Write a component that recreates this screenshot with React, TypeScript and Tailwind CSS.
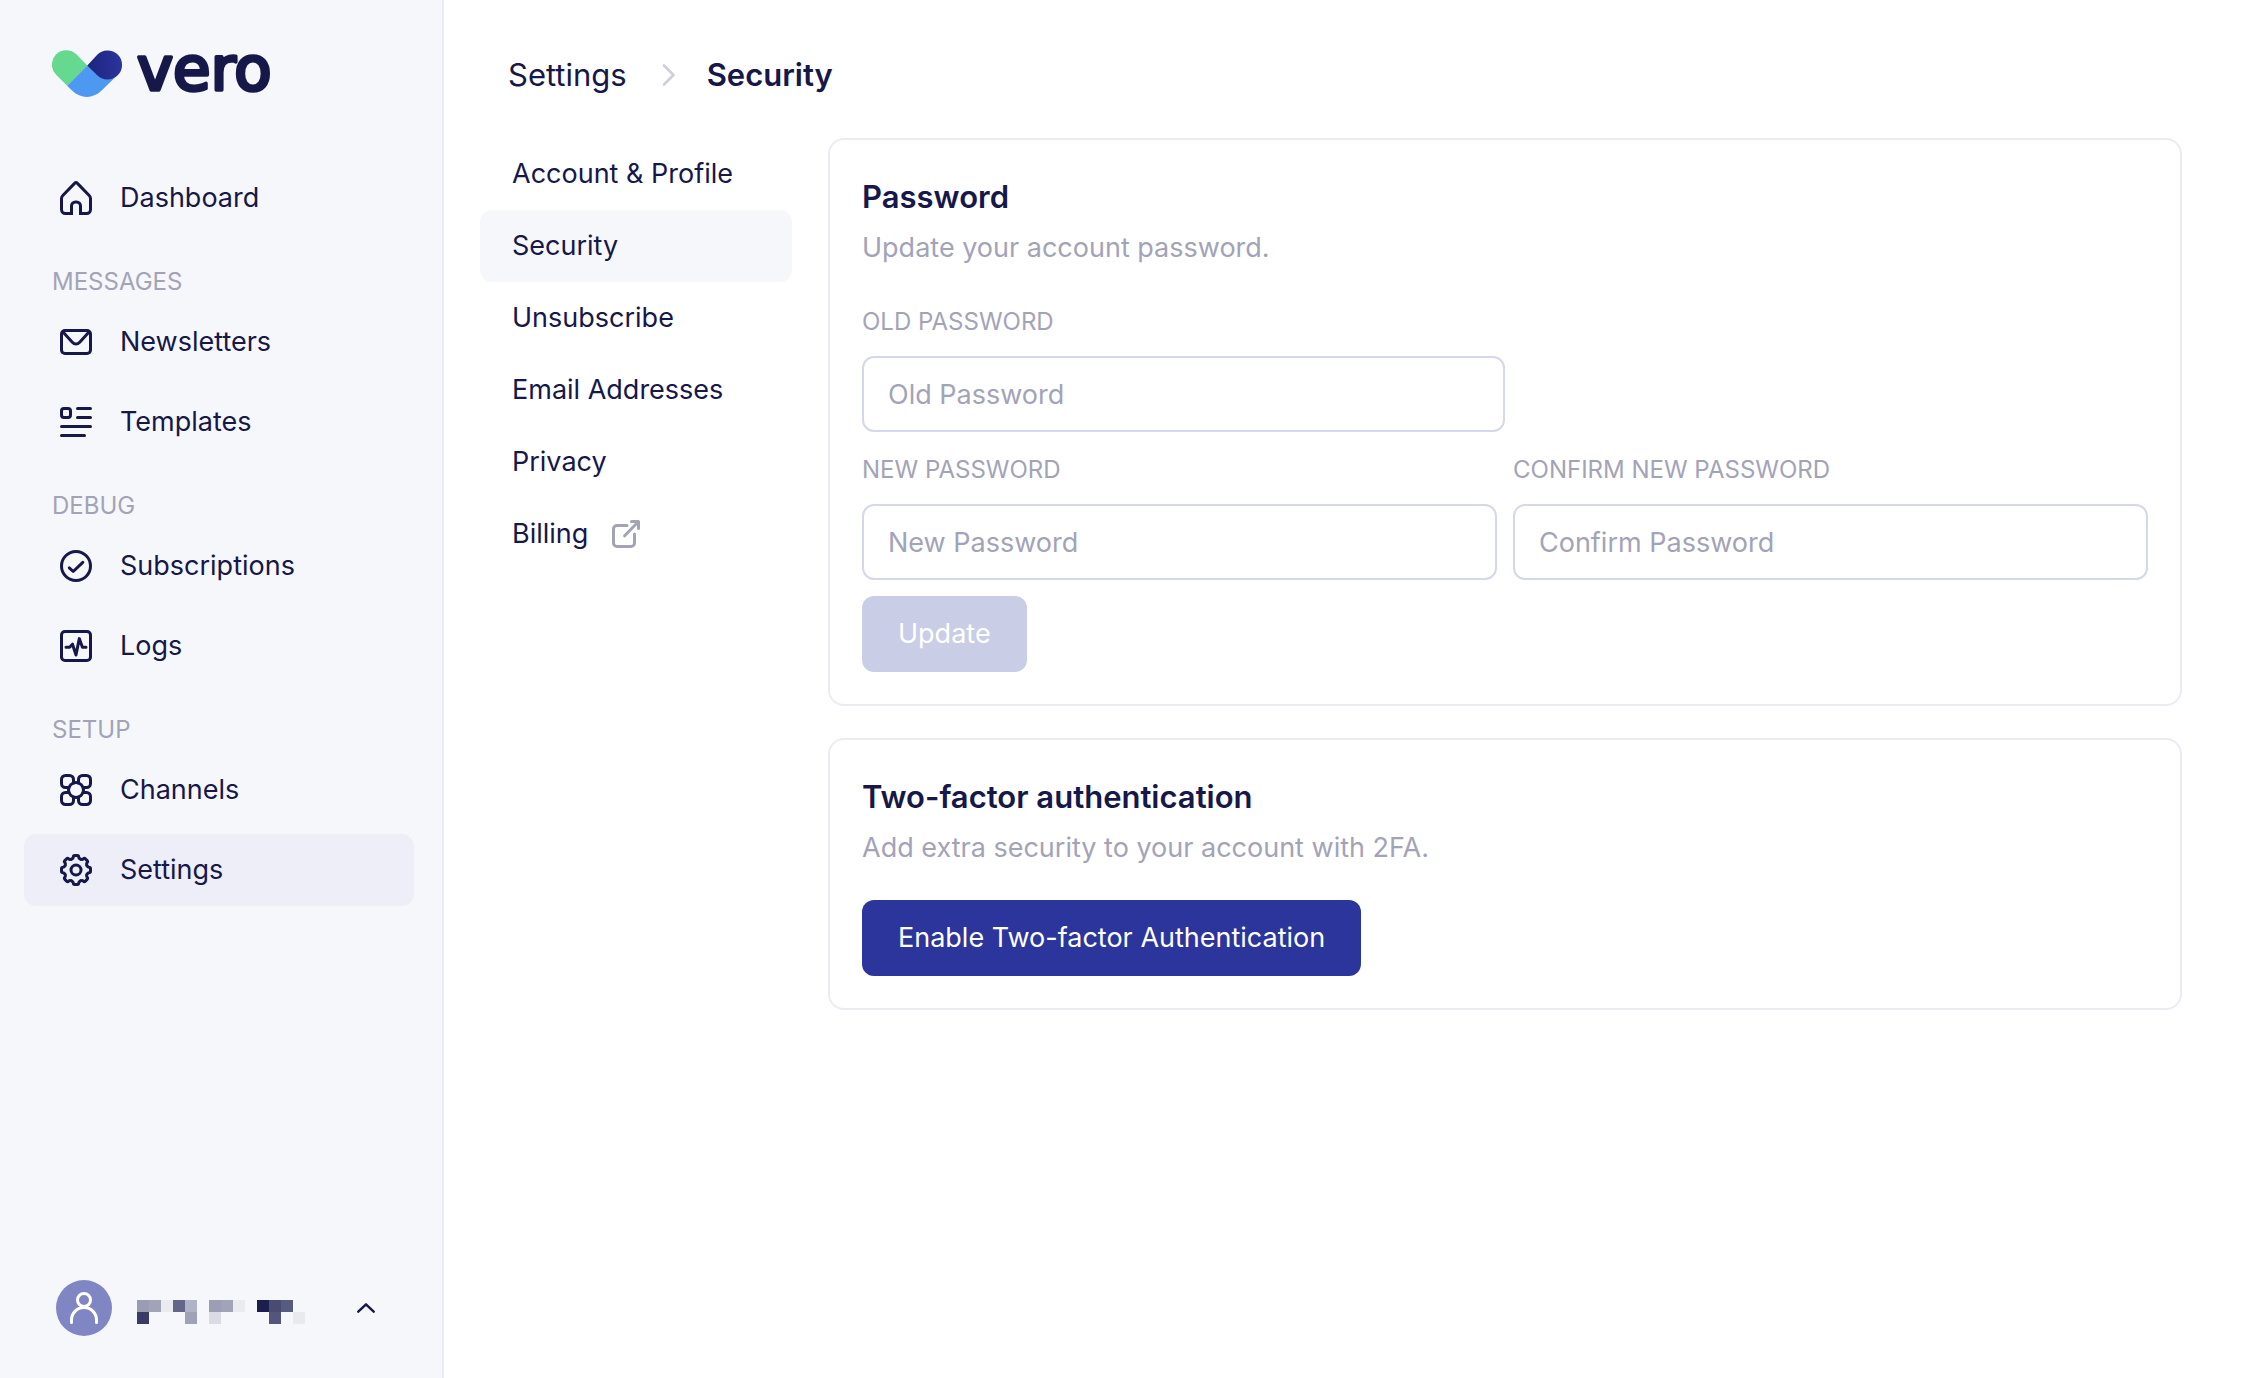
import type { ReactNode } from "react"
import clsx from "clsx"

type NavItem = {
  label: string
  icon: ReactNode
  active?: boolean
}

type NavSection = {
  title?: string
  items: NavItem[]
}

function Icon({ w = 32, h = 32, children }: { w?: number; h?: number; children: ReactNode }) {
  return (
    <svg
      width={w}
      height={h}
      viewBox={`0 0 ${w} ${h}`}
      fill="none"
      stroke="currentColor"
      strokeWidth={3}
      strokeLinecap="round"
      strokeLinejoin="round"
      className="shrink-0"
      aria-hidden="true"
    >
      {children}
    </svg>
  )
}

const homeIcon = (
  <Icon h={34}>
    <path
      strokeLinecap="butt"
      d="M13 32.5H5.5a4 4 0 0 1-4-4V17.6c0-1.3.4-2.2 1.3-3.1L14.8 2.1c.7-.8 1.7-.8 2.4 0l12 12.4c.9.9 1.3 1.8 1.3 3.1v10.9a4 4 0 0 1-4 4H19"
    />
    <path strokeLinecap="butt" d="M11.5 34v-9a4 4 0 0 1 4-4h1a4 4 0 0 1 4 4v9" />
  </Icon>
)

const mailIcon = (
  <Icon h={26}>
    <rect x="1.5" y="1.5" width="29" height="23" rx="3.5" />
    <path d="M3 3l9.3 10.3c2.2 2.4 5.2 2.4 7.4 0L29 3" />
  </Icon>
)

const templatesIcon = (
  <Icon h={30}>
    <rect x="1.5" y="1.5" width="9" height="9" rx="2.5" />
    <path d="M17.5 1.5h13M17.5 10.5h13M1.5 19.5h29M1.5 28.5h23" />
  </Icon>
)

const checkIcon = (
  <Icon>
    <circle cx="16" cy="16" r="14.5" />
    <path d="M9.3 17.8l3.9 3.7L22.8 12.3" />
  </Icon>
)

const logsIcon = (
  <Icon>
    <rect x="1.5" y="1.5" width="29" height="29" rx="3.5" />
    <path d="M6 17.3h3.6l2.9-3.1L16 25l3.3-16.4 3.1 8.7H26" />
  </Icon>
)

const channelsIcon = (
  <Icon>
    <circle cx="16" cy="16" r="7.5" />
    {[0, 90, 180, 270].map((deg) => (
      <path
        key={deg}
        transform={`rotate(${deg} 16 16)`}
        d="M13.5 8.9V5.5a4 4 0 0 0-4-4h-4a4 4 0 0 0-4 4v4a4 4 0 0 0 4 4h3.4"
      />
    ))}
  </Icon>
)

const gearIcon = (
  <Icon>
    <circle cx="16" cy="16" r="5" />
    {[0, 45, 90, 135, 180, 225, 270, 315].map((deg) => (
      <path
        key={deg}
        transform={`translate(16 16) rotate(${deg})`}
        d="M-4.5-10.9C-3.3-11.4-2.7-11.9-2.7-12.8C-2.7-14.1-2.1-14.5-1.2-14.5H1.2C2.1-14.5 2.7-14.1 2.7-12.8C2.7-11.9 3.3-11.4 4.5-10.9"
      />
    ))}
  </Icon>
)

const sections: NavSection[] = [
  { items: [{ label: "Dashboard", icon: homeIcon }] },
  {
    title: "Messages",
    items: [
      { label: "Newsletters", icon: mailIcon },
      { label: "Templates", icon: templatesIcon },
    ],
  },
  {
    title: "Debug",
    items: [
      { label: "Subscriptions", icon: checkIcon },
      { label: "Logs", icon: logsIcon },
    ],
  },
  {
    title: "Setup",
    items: [
      { label: "Channels", icon: channelsIcon },
      { label: "Settings", icon: gearIcon, active: true },
    ],
  },
]

const settingsTabs = [
  { label: "Account & Profile" },
  { label: "Security", active: true },
  { label: "Unsubscribe" },
  { label: "Email Addresses" },
  { label: "Privacy" },
  { label: "Billing", external: true },
]

// [column, row, colour] of the redacted user name
const nameBlocks: [number, number, string][] = [
  [0, 0, "#9b9bb3"],
  [1, 0, "#a1a4b7"],
  [2, 0, "#eaebef"],
  [3, 0, "#646688"],
  [4, 0, "#b0b2c5"],
  [6, 0, "#9b9eb5"],
  [7, 0, "#a1a4b7"],
  [8, 0, "#eaebef"],
  [10, 0, "#1c1e4e"],
  [11, 0, "#494b72"],
  [12, 0, "#585b80"],
  [0, 1, "#3a3c66"],
  [4, 1, "#9fa1b7"],
  [6, 1, "#dadbe5"],
  [11, 1, "#53557a"],
  [13, 1, "#e9eaee"],
]

function Logo() {
  return (
    <svg width="240" height="96" viewBox="0 -30 240 96" role="img" aria-label="vero">
      <defs>
        <linearGradient id="logo-navy" x1="36" y1="15" x2="70" y2="15" gradientUnits="userSpaceOnUse">
          <stop stopColor="#1d2580" />
          <stop offset="1" stopColor="#2b359b" />
        </linearGradient>
      </defs>
      <path d="M35.3 15.4L24.6 4.4A14.4 14.4 0 0 0 4.1 24.8L15.1 35.7z" fill="#66d990" />
      <path d="M35.3 15.4L15.1 35.7l5.2 5.1c8.2 8.2 20.8 8.2 29 0L65.6 25 50 22z" fill="#4d98f0" />
      <path d="M35.3 15.4L45 5A14.5 14.5 0 1 1 45 24.9z" fill="url(#logo-navy)" />
      <text
        x="85"
        y="40"
        fontFamily="'DejaVu Sans', sans-serif"
        fontSize="61"
        fill="#161849"
        stroke="#161849"
        strokeWidth="3.6"
        strokeLinejoin="round"
      >
        vero
      </text>
    </svg>
  )
}

function Sidebar() {
  return (
    <aside className="flex w-[444px] shrink-0 flex-col border-r-2 border-[#ebebf5] bg-[#f6f7fb]">
      <a href="#" className="mt-5 ml-[52px] w-fit">
        <Logo />
      </a>
      <nav className="mt-[46px] pr-7 pl-6">
        {sections.map((section, i) => (
          <div key={i}>
            {section.title ? (
              <h2 className="pt-8 pb-2 pl-7 text-2xl leading-8 text-[#a3a3b8] uppercase">
                {section.title}
              </h2>
            ) : null}
            <ul className="space-y-2">
              {section.items.map((item) => (
                <li key={item.label}>
                  <a
                    href="#"
                    className={clsx(
                      "flex h-[72px] items-center gap-7 rounded-xl pl-9",
                      item.active && "bg-[#eeeef8]"
                    )}
                  >
                    {item.icon}
                    {item.label}
                  </a>
                </li>
              ))}
            </ul>
          </div>
        ))}
      </nav>
      <button type="button" className="mt-auto mb-[42px] flex items-center pr-[67px] pl-14" aria-label="Account menu">
        <span className="flex size-14 items-center justify-center rounded-full bg-[#8086c3] text-white">
          <Icon w={28} h={32}>
            <circle cx="14" cy="8" r="6.5" />
            <path d="M1.5 30.5V28a12.5 12.5 0 0 1 25 0v2.5" />
          </Icon>
        </span>
        <svg
          width="168"
          height="32"
          viewBox="0 -8 168 32"
          className="ml-[25px]"
          shapeRendering="crispEdges"
          aria-hidden="true"
        >
          {nameBlocks.map(([col, row, fill]) => (
            <rect key={`${col}-${row}`} x={col * 12} y={row * 12} width="12" height="12" fill={fill} />
          ))}
        </svg>
        <span className="ml-auto">
          <svg width="18" height="10" viewBox="0 0 18 10" fill="none" aria-hidden="true">
            <path d="M1.3 8.7L9 1.3l7.7 7.4" stroke="currentColor" strokeWidth="2.4" strokeLinecap="round" strokeLinejoin="round" />
          </svg>
        </span>
      </button>
    </aside>
  )
}

function SettingsNav() {
  return (
    <nav className="w-[312px] shrink-0" aria-label="Settings">
      {settingsTabs.map((tab) => (
        <a
          key={tab.label}
          href="#"
          className={clsx("flex h-[72px] items-center gap-6 rounded-xl pl-8", tab.active && "bg-[#f6f7fb]")}
        >
          {tab.label}
          {tab.external ? (
            <span className="text-[#a3a3b8]">
              <Icon w={28} h={28}>
                <path d="M15 5.5H5a3.5 3.5 0 0 0-3.5 3.5v14A3.5 3.5 0 0 0 5 26.5h14a3.5 3.5 0 0 0 3.5-3.5V14" />
                <path d="M12.7 15.8L26 2M19.5 1.5h7V8.5" />
              </Icon>
            </span>
          ) : null}
        </a>
      ))}
    </nav>
  )
}

function Card({ title, description, children }: { title: string; description: string; children: ReactNode }) {
  return (
    <section className="rounded-2xl border-2 border-[#ebebf5] p-8">
      <h2 className="text-[31px] leading-[50px] font-semibold">{title}</h2>
      <p className="mt-1.5 mb-8 leading-10 text-[#a3a3b8]">{description}</p>
      {children}
    </section>
  )
}

function PasswordField({ id, label, placeholder }: { id: string; label: string; placeholder: string }) {
  return (
    <div>
      <label htmlFor={id} className="mb-3 block text-2xl leading-[44px] text-[#a3a3b8] uppercase">
        {label}
      </label>
      <input
        id={id}
        type="password"
        placeholder={placeholder}
        className="block h-[76px] w-full rounded-xl border-2 border-[#d5d7ea] px-6 placeholder:text-[#a3a3b8]"
      />
    </div>
  )
}

export default function App() {
  return (
    <div className="flex min-h-screen bg-white font-['Inter',sans-serif] text-[27px] text-[#161849]">
      <Sidebar />
      <main className="min-w-0 flex-1 pr-[60px] pl-9">
        <nav className="flex items-center gap-8 pt-[50px] pl-7 text-[31px] leading-[50px]" aria-label="Breadcrumb">
          <a href="#">Settings</a>
          <svg width="16" height="22" viewBox="0 0 16 22" fill="none" aria-hidden="true">
            <path d="M5 1.5l9.5 9.5L5 20.5" stroke="#cfcfdc" strokeWidth="2.6" strokeLinecap="round" strokeLinejoin="round" />
          </svg>
          <h1 className="font-semibold">Security</h1>
        </nav>
        <div className="mt-[38px] flex items-start gap-9">
          <SettingsNav />
          <div className="min-w-0 flex-1 space-y-8">
            <Card title="Password" description="Update your account password.">
              <form onSubmit={(e) => e.preventDefault()}>
                <div className="w-1/2">
                  <PasswordField id="old-password" label="Old password" placeholder="Old Password" />
                </div>
                <div className="mt-4 grid grid-cols-2 gap-4">
                  <PasswordField id="new-password" label="New password" placeholder="New Password" />
                  <PasswordField id="confirm-password" label="Confirm new password" placeholder="Confirm Password" />
                </div>
                <button type="submit" disabled className="mt-4 block h-[76px] rounded-xl bg-[#cacde6] px-9 text-white">
                  Update
                </button>
              </form>
            </Card>
            <Card title="Two-factor authentication" description="Add extra security to your account with 2FA.">
              <button type="button" className="block h-[76px] rounded-xl bg-[#2b359b] px-9 text-white">
                Enable Two-factor Authentication
              </button>
            </Card>
          </div>
        </div>
      </main>
    </div>
  )
}
